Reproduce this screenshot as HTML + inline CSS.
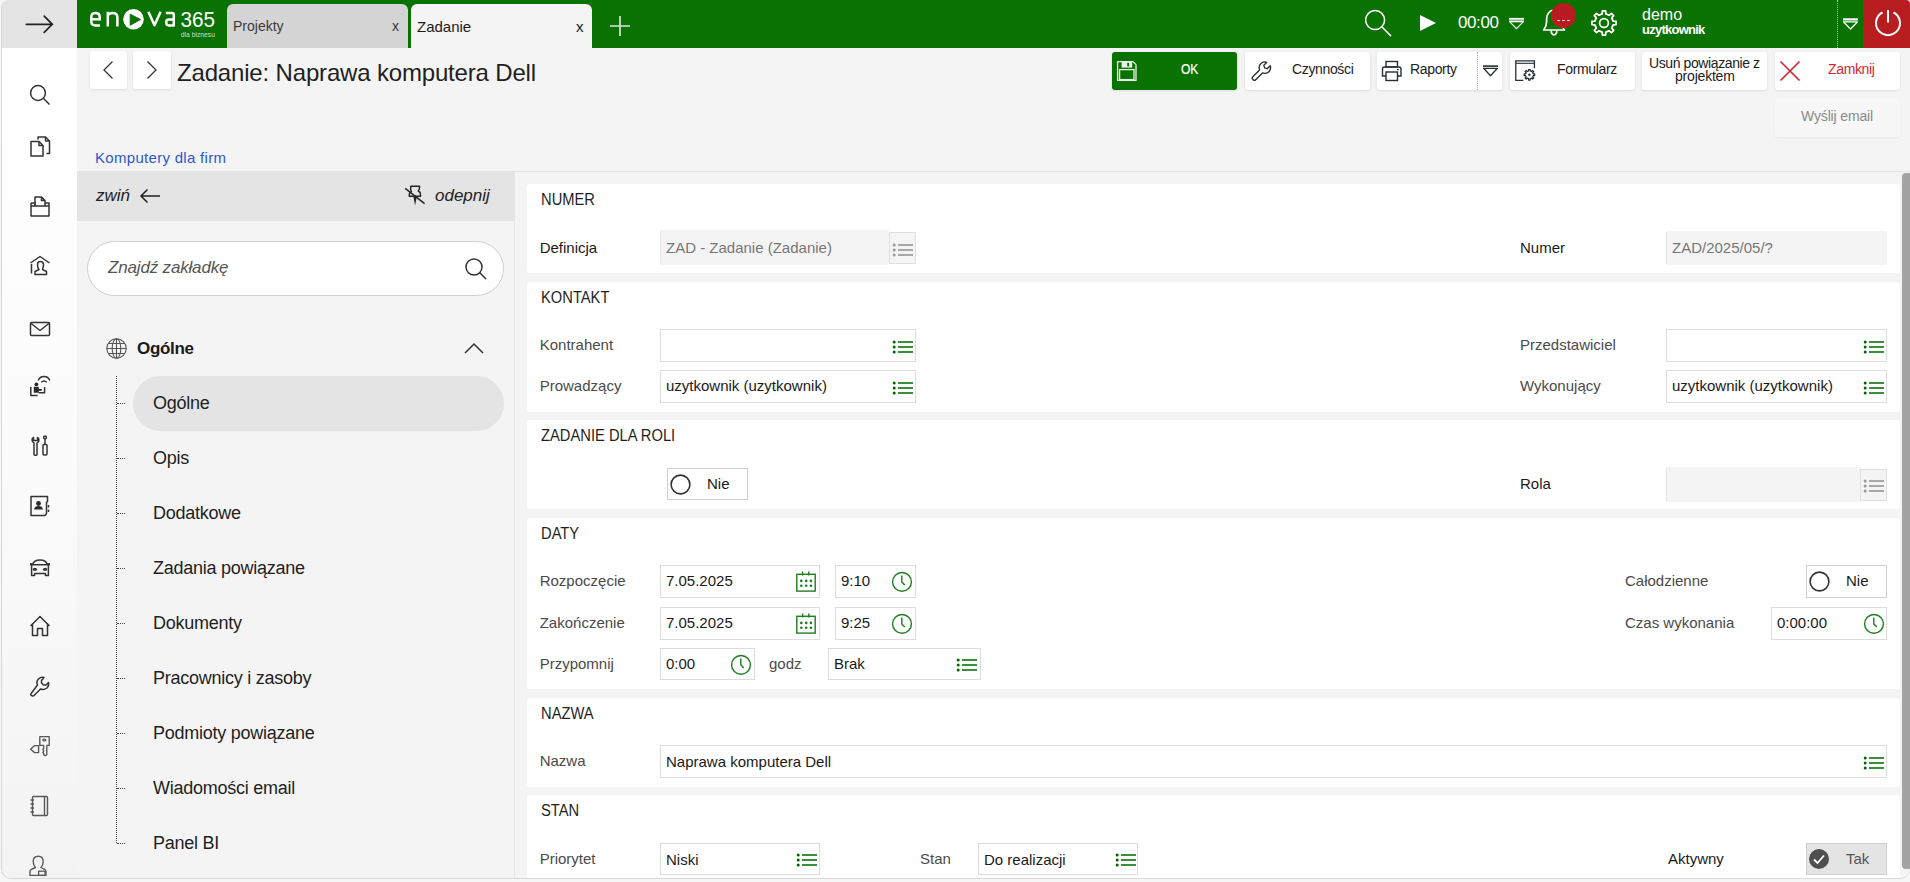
<!DOCTYPE html>
<html><head><meta charset="utf-8"><title>Zadanie</title>
<style>
html,body{margin:0;padding:0;}
body{width:1910px;height:882px;overflow:hidden;background:#f6f6f6;position:relative;
font-family:"Liberation Sans",sans-serif;}
.t{position:absolute;white-space:nowrap;line-height:1;}
.b{position:absolute;box-sizing:border-box;}
.s{position:absolute;overflow:visible;}
</style></head><body>
<div class="b" style="left:1px;top:0;width:1909px;height:879px;border-radius:8px 4px 10px 10px;border-left:1px solid #d8d8d8;border-bottom:1px solid #d8d8d8;overflow:hidden;background:#f4f4f4;"><div class="b" style="left:0;top:48px;width:75px;height:830px;background:linear-gradient(#ffffff 0%,#fbfbfb 50%,#f3f3f3 100%);"></div><div class="b" style="left:0;top:0;width:76px;height:48px;background:#e4e4e4;"></div></div>
<svg class="s" style="left:25px;top:15px;" width="30" height="20" viewBox="0 0 30 20"><path d="M1.3 9.3H27.3M19.2 1.2L27.3 9.3L19.2 17.4" fill="none" stroke="#222" stroke-width="1.7" stroke-linecap="round"/></svg>
<div class="b" style="left:77px;top:0px;width:1786px;height:48px;background:#0a7200;"></div>
<div class="b" style="left:1863px;top:0px;width:47px;height:48px;background:#b81d1f;border-top-right-radius:4px;"></div>
<svg class="s" style="left:77px;top:0px;" width="150" height="48" viewBox="0 0 150 48"><path d="M14.3 19.2H22.7V17C22.7 14.2 21 12.9 18.4 12.9C15.8 12.9 14.3 14.4 14.3 17V21.5C14.3 24.1 15.8 25.4 18.4 25.4H23" fill="none" stroke="#fff" stroke-width="2.5"/><path d="M30.8 11.7V26.6M30.8 15.5C31.8 13.5 33.5 12.9 35.5 12.9C38.8 12.9 40.4 14.5 40.4 17.5V26.6" fill="none" stroke="#fff" stroke-width="2.5"/><circle cx="56.5" cy="19.3" r="10.3" fill="#fff"/><path d="M53.2 14.2L63.5 19.5L53.2 25.2Z" fill="#0a7200" stroke="#0a7200" stroke-width="1" stroke-linejoin="round"/><path d="M71.4 11.8L77.5 25.3L83.6 11.8" fill="none" stroke="#fff" stroke-width="2.5" stroke-linejoin="round"/><path d="M88.8 12.9H95.2C96.3 12.9 96.8 13.5 96.8 14.6V26.6M96.8 19.4H91.7C90 19.4 89.3 20.2 89.3 21.9V23.1C89.3 24.7 90 25.4 91.7 25.4H96.8" fill="none" stroke="#fff" stroke-width="2.5"/><text x="103.6" y="26.6" font-size="21.5" fill="#fff" font-family="Liberation Sans" textLength="34.5" lengthAdjust="spacingAndGlyphs">365</text><text x="103.8" y="36.8" font-size="7.2" fill="#c9dfc6" font-family="Liberation Sans" textLength="34.2" lengthAdjust="spacingAndGlyphs">dla biznesu</text></svg>
<div class="b" style="left:227px;top:4px;width:181px;height:44px;background:#d4d4d4;border-radius:6px 6px 0 0;"></div>
<div class="t" style="left:233px;top:19px;font-size:14px;color:#3a3a3a;font-weight:normal;font-style:normal;">Projekty</div>
<div class="t" style="left:392px;top:19px;font-size:14px;color:#3a3a3a;font-weight:normal;font-style:normal;">x</div>
<div class="b" style="left:411px;top:4px;width:181px;height:44px;background:#f4f4f4;border-radius:6px 6px 0 0;"></div>
<div class="t" style="left:417px;top:19px;font-size:15px;color:#1a1a1a;font-weight:normal;font-style:normal;">Zadanie</div>
<div class="t" style="left:576px;top:19px;font-size:15px;color:#1a1a1a;font-weight:normal;font-style:normal;">x</div>
<svg class="s" style="left:609px;top:15px;" width="22" height="22" viewBox="0 0 22 22"><path d="M11 1V21M1 11H21" stroke="#d5e8d5" stroke-width="1.7"/></svg>
<svg class="s" style="left:1363px;top:8px;" width="30" height="30" viewBox="0 0 30 30"><circle cx="12.1" cy="12.1" r="9.5" fill="none" stroke="#fff" stroke-width="1.5"/><path d="M19 19L27.6 27.6" stroke="#fff" stroke-width="1.5" stroke-linecap="round"/></svg>
<svg class="s" style="left:1418px;top:13px;" width="22" height="20" viewBox="0 0 22 20"><path d="M2 2L18 10L2 18Z" fill="#fff"/></svg>
<div class="t" style="left:1458px;top:14px;font-size:17px;color:#fff;font-weight:normal;font-style:normal;letter-spacing:-0.4px;">00:00</div>
<svg class="s" style="left:1508px;top:16px;" width="18" height="16" viewBox="0 0 18 16"><rect x="1" y="1.9" width="15" height="1.8" fill="#fff"/><rect x="1" y="3.7" width="15" height="1.9" fill="#fff" opacity=".5"/><path d="M1.6 5.6H15.4L8.5 12.6Z" fill="none" stroke="#fff" stroke-width="1.2" stroke-linejoin="round"/></svg>
<svg class="s" style="left:1541px;top:8px;" width="28" height="30" viewBox="0 0 28 30"><path d="M2.6 22C4.6 19.5 5.6 17.5 5.6 14V11C5.6 6 8.6 2.2 13 2.2C17.4 2.2 20.4 6 20.4 11V14C20.4 17.5 21.4 19.5 23.4 22Z" fill="none" stroke="#fff" stroke-width="1.7" stroke-linejoin="round"/><path d="M10.2 22.6C10.2 25.4 11.5 26.8 13 26.8C14.5 26.8 15.8 25.4 15.8 22.6" fill="none" stroke="#fff" stroke-width="1.7"/></svg>
<svg class="s" style="left:1550px;top:2px;" width="28" height="28" viewBox="0 0 28 28"><circle cx="13.5" cy="13.5" r="12.5" fill="#b81c20"/><path d="M7.3 18.5H9.9M12.2 18.5H14.8M17.1 18.5H19.7" stroke="#fff" stroke-width="1.1"/></svg>
<svg class="s" style="left:1591px;top:10px;" width="26" height="26" viewBox="0 0 26 26"><path d="M22.11 11.15L25.10 11.42L25.10 14.58L22.11 14.85L20.75 18.14L22.67 20.44L20.44 22.67L18.14 20.75L14.85 22.11L14.58 25.10L11.42 25.10L11.15 22.11L7.86 20.75L5.56 22.67L3.33 20.44L5.25 18.14L3.89 14.85L0.90 14.58L0.90 11.42L3.89 11.15L5.25 7.86L3.33 5.56L5.56 3.33L7.86 5.25L11.15 3.89L11.42 0.90L14.58 0.90L14.85 3.89L18.14 5.25L20.44 3.33L22.67 5.56L20.75 7.86Z" fill="none" stroke="#fff" stroke-width="1.8" stroke-linejoin="round"/><circle cx="13" cy="13" r="4.4" fill="none" stroke="#fff" stroke-width="1.7"/></svg>
<div class="t" style="left:1642px;top:7px;font-size:16px;color:#fff;font-weight:normal;font-style:normal;">demo</div>
<div class="t" style="left:1642px;top:23px;font-size:13px;color:#fff;font-weight:bold;font-style:normal;letter-spacing:-0.75px;">uzytkownik</div>
<div class="b" style="left:1837px;top:0px;width:1px;height:48px;border-left:1px dotted rgba(255,255,255,.6);"></div>
<svg class="s" style="left:1842px;top:16px;" width="18" height="16" viewBox="0 0 18 16"><rect x="1" y="2.3" width="15" height="1.8" fill="#fff"/><rect x="1" y="4.1" width="15" height="1.9" fill="#fff" opacity=".5"/><path d="M1.6 6H15.4L8.5 13Z" fill="none" stroke="#fff" stroke-width="1.2" stroke-linejoin="round"/></svg>
<svg class="s" style="left:1874px;top:9px;" width="28" height="28" viewBox="0 0 28 28"><path d="M8.5 3.5A12 12 0 1 0 19.5 3.5" fill="none" stroke="#fff" stroke-width="2"/><path d="M14 1V13.5" stroke="#fff" stroke-width="2"/></svg>
<div class="b" style="left:90px;top:51px;width:37px;height:38px;background:#fff;border-radius:3px;box-shadow:0 1px 3px rgba(0,0,0,.10);"></div>
<div class="b" style="left:133px;top:51px;width:38px;height:38px;background:#fff;border-radius:3px;box-shadow:0 1px 3px rgba(0,0,0,.10);"></div>
<svg class="s" style="left:101px;top:60px;" width="14" height="20" viewBox="0 0 14 20"><path d="M11.5 1.5L3 10L11.5 18.5" fill="none" stroke="#333" stroke-width="1.3"/></svg>
<svg class="s" style="left:145px;top:60px;" width="14" height="20" viewBox="0 0 14 20"><path d="M2.5 1.5L11 10L2.5 18.5" fill="none" stroke="#333" stroke-width="1.3"/></svg>
<div class="t" style="left:177px;top:61px;font-size:24px;color:#1f1f1f;font-weight:normal;font-style:normal;letter-spacing:-0.17px;">Zadanie: Naprawa komputera Dell</div>
<div class="b" style="left:1112px;top:52px;width:125px;height:38px;background:#0a7200;border-radius:3px;box-shadow:0 1px 3px rgba(0,0,0,.10);"></div>
<svg class="s" style="left:1116px;top:60px;" width="22" height="22" viewBox="0 0 22 22"><path d="M1.6 1.6H17L20 4.6V20.4H1.6Z" fill="none" stroke="#e8f2e8" stroke-width="1.3" stroke-linejoin="round"/><rect x="5.6" y="1.8" width="10.6" height="5.8" fill="#e8f2e8"/><rect x="11.2" y="2.8" width="1.9" height="3.6" fill="#0b7000"/><rect x="3.6" y="9.6" width="14.4" height="10" fill="none" stroke="#e8f2e8" stroke-width="1.3"/></svg>
<div class="t" style="left:1181px;top:61px;font-size:15px;color:#fff;font-weight:normal;font-style:normal;transform:scaleX(0.8);transform-origin:0 0;-webkit-text-stroke:0.2px #fff;">OK</div>
<div class="b" style="left:1245px;top:52px;width:125px;height:38px;background:#fff;border-radius:3px;box-shadow:0 1px 3px rgba(0,0,0,.10);"></div>
<svg class="s" style="left:1249px;top:59px;" width="24" height="24" viewBox="0 0 24 24"><g transform="translate(1.2 1.2) scale(0.85)"><path d="M3 22.5C2 21.5 2 20.5 3 19.5L11 11.5C10 8.5 10.5 5.5 13 3.5C15 2 17.5 1.5 19.5 2.5L16 6L17 9L20 10L23.5 6.5C24.3 8.5 24 11 22.5 13C20.5 15.5 17.5 16 14.5 15L6.5 23C5.5 24 4.5 24 3.5 23Z" fill="none" stroke="#263036" stroke-width="1.6" stroke-linejoin="round"/></g></svg>
<div class="t" style="left:1292px;top:62px;font-size:14px;color:#222;font-weight:normal;font-style:normal;letter-spacing:-0.35px;">Czynności</div>
<div class="b" style="left:1377px;top:52px;width:125px;height:38px;background:#fff;border-radius:3px;box-shadow:0 1px 3px rgba(0,0,0,.10);"></div>
<div class="b" style="left:1477px;top:52px;width:1px;height:38px;border-left:1px dotted #aaa;"></div>
<svg class="s" style="left:1381px;top:60px;" width="24" height="24" viewBox="0 0 24 24"><g fill="none" stroke="#263036" stroke-width="1.4"><rect x="5" y="1.5" width="11.5" height="5.5"/><path d="M5 16H1.5V9C1.5 8 2 7 3.5 7H18C19.5 7 20 8 20 9V16H16.5"/><rect x="5" y="12" width="11.5" height="8.5"/></g><circle cx="16.8" cy="9.6" r=".9" fill="#263036"/></svg>
<div class="t" style="left:1410px;top:62px;font-size:14px;color:#222;font-weight:normal;font-style:normal;letter-spacing:-0.35px;">Raporty</div>
<svg class="s" style="left:1482px;top:62px;" width="18" height="16" viewBox="0 0 18 16"><rect x="1" y="3.3" width="15" height="1.6" fill="#263036"/><path d="M1.6 6.3H15.4L8.5 13.8Z" fill="none" stroke="#263036" stroke-width="1.3" stroke-linejoin="round"/></svg>
<div class="b" style="left:1510px;top:52px;width:125px;height:38px;background:#fff;border-radius:3px;box-shadow:0 1px 3px rgba(0,0,0,.10);"></div>
<svg class="s" style="left:1515px;top:60px;" width="22" height="22" viewBox="0 0 22 22"><g fill="none" stroke="#263036" stroke-width="1.3"><path d="M8.4 20.3H0.8V0.8H19.4V8.3"/><path d="M0.8 3.3H19.4" stroke-width="1.1"/><path d="M18.21 13.95L19.64 14.01L19.64 15.59L18.21 15.65L17.69 16.89L18.67 17.95L17.55 19.07L16.49 18.09L15.25 18.61L15.19 20.04L13.61 20.04L13.55 18.61L12.31 18.09L11.25 19.07L10.13 17.95L11.11 16.89L10.59 15.65L9.16 15.59L9.16 14.01L10.59 13.95L11.11 12.71L10.13 11.65L11.25 10.53L12.31 11.51L13.55 10.99L13.61 9.56L15.19 9.56L15.25 10.99L16.49 11.51L17.55 10.53L18.67 11.65L17.69 12.71Z" stroke-linejoin="round"/></g><circle cx="14.4" cy="14.8" r="1.2" fill="#263036"/></svg>
<div class="t" style="left:1557px;top:62px;font-size:14px;color:#222;font-weight:normal;font-style:normal;letter-spacing:-0.35px;">Formularz</div>
<div class="b" style="left:1642px;top:52px;width:125px;height:38px;background:#fff;border-radius:3px;box-shadow:0 1px 3px rgba(0,0,0,.10);"></div>
<div class="t" style="left:1649px;top:56px;font-size:14px;color:#222;font-weight:normal;font-style:normal;letter-spacing:-0.4px;">Usuń powiązanie z</div>
<div class="t" style="left:1675px;top:69px;font-size:14px;color:#222;font-weight:normal;font-style:normal;letter-spacing:-0.2px;">projektem</div>
<div class="b" style="left:1775px;top:52px;width:125px;height:38px;background:#fff;border-radius:3px;box-shadow:0 1px 3px rgba(0,0,0,.10);"></div>
<svg class="s" style="left:1778px;top:59px;" width="24" height="24" viewBox="0 0 24 24"><path d="M2.5 2.5L21.5 21.5M21.5 2.5L2.5 21.5" stroke="#d32630" stroke-width="1.7"/></svg>
<div class="t" style="left:1828px;top:62px;font-size:14px;color:#d32630;font-weight:normal;font-style:normal;letter-spacing:-0.35px;">Zamknij</div>
<div class="b" style="left:1775px;top:99px;width:125px;height:38px;background:#f7f7f7;border-radius:3px;box-shadow:0 1px 2px rgba(0,0,0,.05);"></div>
<div class="t" style="left:1801px;top:109px;font-size:14px;color:#8a8a8a;font-weight:normal;font-style:normal;letter-spacing:-0.15px;">Wyślij email</div>
<div class="t" style="left:95px;top:150px;font-size:15px;color:#2f56d4;font-weight:normal;font-style:normal;letter-spacing:0.3px;">Komputery dla firm</div>
<div class="b" style="left:77px;top:171px;width:437px;height:50px;background:#e4e4e4;"></div>
<div class="b" style="left:514px;top:171px;width:1px;height:707px;background:#e6e6e6;"></div>
<div class="t" style="left:96px;top:187px;font-size:17px;color:#222;font-weight:normal;font-style:italic;">zwiń</div>
<svg class="s" style="left:139px;top:188px;" width="22" height="16" viewBox="0 0 22 16"><path d="M21 8H2M8.5 1.5L2 8L8.5 14.5" fill="none" stroke="#222" stroke-width="1.5"/></svg>
<svg class="s" style="left:404px;top:185px;" width="22" height="22" viewBox="0 0 22 22"><path d="M6.8 1.3H15.6L15.2 4.6L14.2 5.9L16.2 7.6L16.6 11.2H5.2L5.4 8.6L7.4 6.6L6.6 4.4Z" fill="none" stroke="#222" stroke-width="1.4" stroke-linejoin="round"/><path d="M9.4 11.2H12.8L11.1 20.6Z" fill="#222"/><path d="M1.2 3.4L20.6 18.6" stroke="#222" stroke-width="1.4"/></svg>
<div class="t" style="left:435px;top:187px;font-size:17px;color:#222;font-weight:normal;font-style:italic;">odepnij</div>
<div class="b" style="left:87px;top:241px;width:417px;height:55px;background:#fff;border:1px solid #cfcfcf;border-radius:28px;"></div>
<div class="t" style="left:108px;top:259px;font-size:17px;color:#555;font-weight:normal;font-style:italic;letter-spacing:-0.17px;">Znajdź zakładkę</div>
<svg class="s" style="left:463px;top:256px;" width="26" height="26" viewBox="0 0 26 26"><circle cx="11" cy="11" r="8" fill="none" stroke="#333" stroke-width="1.5"/><path d="M16.8 16.8L23 23" stroke="#333" stroke-width="1.5"/></svg>
<svg class="s" style="left:105px;top:337px;" width="23" height="23" viewBox="0 0 23 23"><g fill="none" stroke="#555" stroke-width="1.1"><circle cx="11.5" cy="11.5" r="9.7"/><ellipse cx="11.5" cy="11.5" rx="4.3" ry="9.7"/><path d="M11.5 1.8V21.2M1.8 11.5H21.2M3.2 6.5H19.8M3.2 16.5H19.8"/></g></svg>
<div class="t" style="left:137px;top:340px;font-size:17px;color:#1a1a1a;font-weight:bold;font-style:normal;letter-spacing:-0.3px;">Ogólne</div>
<svg class="s" style="left:463px;top:341px;" width="22" height="14" viewBox="0 0 22 14"><path d="M2 12L11 3L20 12" fill="none" stroke="#333" stroke-width="1.5"/></svg>
<div class="b" style="left:116px;top:376px;width:1px;height:467px;border-left:1px dotted #444;"></div>
<div class="b" style="left:133px;top:376px;width:371px;height:55px;background:#e4e4e4;border-radius:28px;"></div>
<div class="b" style="left:117px;top:403px;width:8px;height:1px;border-top:1px dotted #444;"></div>
<div class="t" style="left:153px;top:394px;font-size:18px;color:#1f1f1f;font-weight:normal;font-style:normal;letter-spacing:-0.25px;">Ogólne</div>
<div class="b" style="left:117px;top:458px;width:8px;height:1px;border-top:1px dotted #444;"></div>
<div class="t" style="left:153px;top:449px;font-size:18px;color:#1f1f1f;font-weight:normal;font-style:normal;letter-spacing:-0.25px;">Opis</div>
<div class="b" style="left:117px;top:513px;width:8px;height:1px;border-top:1px dotted #444;"></div>
<div class="t" style="left:153px;top:504px;font-size:18px;color:#1f1f1f;font-weight:normal;font-style:normal;letter-spacing:-0.25px;">Dodatkowe</div>
<div class="b" style="left:117px;top:568px;width:8px;height:1px;border-top:1px dotted #444;"></div>
<div class="t" style="left:153px;top:559px;font-size:18px;color:#1f1f1f;font-weight:normal;font-style:normal;letter-spacing:-0.25px;">Zadania powiązane</div>
<div class="b" style="left:117px;top:623px;width:8px;height:1px;border-top:1px dotted #444;"></div>
<div class="t" style="left:153px;top:614px;font-size:18px;color:#1f1f1f;font-weight:normal;font-style:normal;letter-spacing:-0.25px;">Dokumenty</div>
<div class="b" style="left:117px;top:678px;width:8px;height:1px;border-top:1px dotted #444;"></div>
<div class="t" style="left:153px;top:669px;font-size:18px;color:#1f1f1f;font-weight:normal;font-style:normal;letter-spacing:-0.25px;">Pracownicy i zasoby</div>
<div class="b" style="left:117px;top:733px;width:8px;height:1px;border-top:1px dotted #444;"></div>
<div class="t" style="left:153px;top:724px;font-size:18px;color:#1f1f1f;font-weight:normal;font-style:normal;letter-spacing:-0.25px;">Podmioty powiązane</div>
<div class="b" style="left:117px;top:788px;width:8px;height:1px;border-top:1px dotted #444;"></div>
<div class="t" style="left:153px;top:779px;font-size:18px;color:#1f1f1f;font-weight:normal;font-style:normal;letter-spacing:-0.25px;">Wiadomości email</div>
<div class="b" style="left:117px;top:843px;width:8px;height:1px;border-top:1px dotted #444;"></div>
<div class="t" style="left:153px;top:834px;font-size:18px;color:#1f1f1f;font-weight:normal;font-style:normal;letter-spacing:-0.25px;">Panel BI</div>
<div class="b" style="left:515px;top:171px;width:1395px;height:1px;background:#e2e2e2;"></div>
<div class="b" style="left:527px;top:184px;width:1373px;height:89px;background:#fff;border-radius:3px;"></div>
<div class="b" style="left:527px;top:282px;width:1373px;height:130px;background:#fff;border-radius:3px;"></div>
<div class="b" style="left:527px;top:420px;width:1373px;height:89px;background:#fff;border-radius:3px;"></div>
<div class="b" style="left:527px;top:518px;width:1373px;height:171px;background:#fff;border-radius:3px;"></div>
<div class="b" style="left:527px;top:698px;width:1373px;height:89px;background:#fff;border-radius:3px;"></div>
<div class="b" style="left:527px;top:795px;width:1373px;height:83px;background:#fff;border-radius:3px 3px 0 0;"></div>
<div class="t" style="left:541px;top:192px;font-size:16px;color:#1f1f1f;font-weight:normal;font-style:normal;transform:scaleX(0.92);transform-origin:0 0;">NUMER</div>
<div class="t" style="left:539.7px;top:240px;font-size:15px;color:#1a1a1a;font-weight:normal;font-style:normal;">Definicja</div>
<div class="b" style="left:660px;top:230px;width:230px;height:35px;background:#f4f4f4;border-left:1px solid #e6e6e6;border-radius:2px;"></div>
<div class="b" style="left:889px;top:232px;width:27px;height:32px;background:#f4f4f4;border:1px solid #e0e0e0;"></div>
<svg class="s" style="left:892px;top:243px;" width="20" height="14" viewBox="0 0 20 14"><circle cx="2.2" cy="2" r="1.5" fill="#9a9a9a"/><circle cx="2.2" cy="7" r="1.5" fill="#9a9a9a"/><circle cx="2.2" cy="12" r="1.5" fill="#9a9a9a"/><path d="M6 2H21M6 7H21M6 12H21" stroke="#a8a8a8" stroke-width="1.9"/></svg>
<div class="t" style="left:666px;top:240px;font-size:15px;color:#777;font-weight:normal;font-style:normal;">ZAD - Zadanie (Zadanie)</div>
<div class="t" style="left:1520px;top:240px;font-size:15px;color:#1a1a1a;font-weight:normal;font-style:normal;">Numer</div>
<div class="b" style="left:1666px;top:231px;width:221px;height:34px;background:#f4f4f4;border-left:1px solid #e6e6e6;border-radius:2px;"></div>
<div class="t" style="left:1672px;top:240px;font-size:15px;color:#777;font-weight:normal;font-style:normal;">ZAD/2025/05/?</div>
<div class="t" style="left:541px;top:290px;font-size:16px;color:#1f1f1f;font-weight:normal;font-style:normal;transform:scaleX(0.92);transform-origin:0 0;">KONTAKT</div>
<div class="t" style="left:539.7px;top:337px;font-size:15px;color:#4a4a4a;font-weight:normal;font-style:normal;">Kontrahent</div>
<div class="b" style="left:660px;top:329px;width:256px;height:33px;background:#fff;border:1px solid #dcdcdc;"></div>
<svg class="s" style="left:892px;top:340px;" width="20" height="14" viewBox="0 0 20 14"><circle cx="2.2" cy="2" r="1.5" fill="#006400"/><circle cx="2.2" cy="7" r="1.5" fill="#006400"/><circle cx="2.2" cy="12" r="1.5" fill="#006400"/><path d="M6 2H21M6 7H21M6 12H21" stroke="#3b8f3b" stroke-width="1.9"/></svg>
<div class="t" style="left:539.7px;top:378px;font-size:15px;color:#4a4a4a;font-weight:normal;font-style:normal;">Prowadzący</div>
<div class="b" style="left:660px;top:370px;width:256px;height:33px;background:#fff;border:1px solid #dcdcdc;"></div>
<svg class="s" style="left:892px;top:381px;" width="20" height="14" viewBox="0 0 20 14"><circle cx="2.2" cy="2" r="1.5" fill="#006400"/><circle cx="2.2" cy="7" r="1.5" fill="#006400"/><circle cx="2.2" cy="12" r="1.5" fill="#006400"/><path d="M6 2H21M6 7H21M6 12H21" stroke="#3b8f3b" stroke-width="1.9"/></svg>
<div class="t" style="left:666px;top:378px;font-size:15px;color:#1a1a1a;font-weight:normal;font-style:normal;">uzytkownik (uzytkownik)</div>
<div class="t" style="left:1520px;top:337px;font-size:15px;color:#4a4a4a;font-weight:normal;font-style:normal;">Przedstawiciel</div>
<div class="b" style="left:1666px;top:329px;width:221px;height:33px;background:#fff;border:1px solid #dcdcdc;"></div>
<svg class="s" style="left:1863px;top:340px;" width="20" height="14" viewBox="0 0 20 14"><circle cx="2.2" cy="2" r="1.5" fill="#006400"/><circle cx="2.2" cy="7" r="1.5" fill="#006400"/><circle cx="2.2" cy="12" r="1.5" fill="#006400"/><path d="M6 2H21M6 7H21M6 12H21" stroke="#3b8f3b" stroke-width="1.9"/></svg>
<div class="t" style="left:1520px;top:378px;font-size:15px;color:#4a4a4a;font-weight:normal;font-style:normal;">Wykonujący</div>
<div class="b" style="left:1666px;top:370px;width:221px;height:33px;background:#fff;border:1px solid #dcdcdc;"></div>
<svg class="s" style="left:1863px;top:381px;" width="20" height="14" viewBox="0 0 20 14"><circle cx="2.2" cy="2" r="1.5" fill="#006400"/><circle cx="2.2" cy="7" r="1.5" fill="#006400"/><circle cx="2.2" cy="12" r="1.5" fill="#006400"/><path d="M6 2H21M6 7H21M6 12H21" stroke="#3b8f3b" stroke-width="1.9"/></svg>
<div class="t" style="left:1672px;top:378px;font-size:15px;color:#1a1a1a;font-weight:normal;font-style:normal;">uzytkownik (uzytkownik)</div>
<div class="t" style="left:541px;top:428px;font-size:16px;color:#1f1f1f;font-weight:normal;font-style:normal;transform:scaleX(0.92);transform-origin:0 0;">ZADANIE DLA ROLI</div>
<div class="b" style="left:667px;top:468px;width:81px;height:32px;background:#fff;border:1px solid #cfcfcf;"></div>
<svg class="s" style="left:670px;top:474px;" width="21" height="21" viewBox="0 0 21 21"><circle cx="10.5" cy="10.5" r="9.4" fill="none" stroke="#333" stroke-width="1.6"/></svg>
<div class="t" style="left:707px;top:476px;font-size:15px;color:#1a1a1a;font-weight:normal;font-style:normal;">Nie</div>
<div class="t" style="left:1520px;top:476px;font-size:15px;color:#1a1a1a;font-weight:normal;font-style:normal;">Rola</div>
<div class="b" style="left:1666px;top:467px;width:195px;height:35px;background:#f4f4f4;border-left:1px solid #e6e6e6;border-radius:2px;"></div>
<div class="b" style="left:1860px;top:469px;width:27px;height:32px;background:#f4f4f4;border:1px solid #e0e0e0;"></div>
<svg class="s" style="left:1863px;top:479px;" width="20" height="14" viewBox="0 0 20 14"><circle cx="2.2" cy="2" r="1.5" fill="#9a9a9a"/><circle cx="2.2" cy="7" r="1.5" fill="#9a9a9a"/><circle cx="2.2" cy="12" r="1.5" fill="#9a9a9a"/><path d="M6 2H21M6 7H21M6 12H21" stroke="#a8a8a8" stroke-width="1.9"/></svg>
<div class="t" style="left:541px;top:526px;font-size:16px;color:#1f1f1f;font-weight:normal;font-style:normal;transform:scaleX(0.92);transform-origin:0 0;">DATY</div>
<div class="t" style="left:539.7px;top:573px;font-size:15px;color:#4a4a4a;font-weight:normal;font-style:normal;">Rozpoczęcie</div>
<div class="b" style="left:660px;top:565px;width:160px;height:33px;background:#fff;border:1px solid #dcdcdc;"></div>
<div class="t" style="left:666px;top:573px;font-size:15px;color:#1a1a1a;font-weight:normal;font-style:normal;">7.05.2025</div>
<svg class="s" style="left:795px;top:571px;" width="22" height="22" viewBox="0 0 22 22"><rect x="1.8" y="3.3" width="18.4" height="16.8" fill="none" stroke="#1e7d1e" stroke-width="1.4"/><path d="M7.6 0.6V4.4M13.8 0.6V4.4" stroke="#1e7d1e" stroke-width="1.4"/><circle cx="6.3" cy="9.9" r="1.3" fill="#1e7d1e"/><circle cx="6.3" cy="14.7" r="1.3" fill="#1e7d1e"/><circle cx="11.2" cy="9.9" r="1.3" fill="#1e7d1e"/><circle cx="11.2" cy="14.7" r="1.3" fill="#1e7d1e"/><circle cx="15.9" cy="9.9" r="1.3" fill="#1e7d1e"/><circle cx="15.9" cy="14.7" r="1.3" fill="#1e7d1e"/></svg>
<div class="b" style="left:835px;top:565px;width:81px;height:33px;background:#fff;border:1px solid #dcdcdc;"></div>
<div class="t" style="left:841px;top:573px;font-size:15px;color:#1a1a1a;font-weight:normal;font-style:normal;">9:10</div>
<svg class="s" style="left:891px;top:571px;" width="22" height="22" viewBox="0 0 22 22"><circle cx="11" cy="10.9" r="9.4" fill="none" stroke="#1e7d1e" stroke-width="1.4"/><path d="M10.8 4.4V10.9L13.8 14" fill="none" stroke="#1e7d1e" stroke-width="1.4"/></svg>
<div class="t" style="left:539.7px;top:615px;font-size:15px;color:#4a4a4a;font-weight:normal;font-style:normal;">Zakończenie</div>
<div class="b" style="left:660px;top:607px;width:160px;height:33px;background:#fff;border:1px solid #dcdcdc;"></div>
<div class="t" style="left:666px;top:615px;font-size:15px;color:#1a1a1a;font-weight:normal;font-style:normal;">7.05.2025</div>
<svg class="s" style="left:795px;top:613px;" width="22" height="22" viewBox="0 0 22 22"><rect x="1.8" y="3.3" width="18.4" height="16.8" fill="none" stroke="#1e7d1e" stroke-width="1.4"/><path d="M7.6 0.6V4.4M13.8 0.6V4.4" stroke="#1e7d1e" stroke-width="1.4"/><circle cx="6.3" cy="9.9" r="1.3" fill="#1e7d1e"/><circle cx="6.3" cy="14.7" r="1.3" fill="#1e7d1e"/><circle cx="11.2" cy="9.9" r="1.3" fill="#1e7d1e"/><circle cx="11.2" cy="14.7" r="1.3" fill="#1e7d1e"/><circle cx="15.9" cy="9.9" r="1.3" fill="#1e7d1e"/><circle cx="15.9" cy="14.7" r="1.3" fill="#1e7d1e"/></svg>
<div class="b" style="left:835px;top:607px;width:81px;height:33px;background:#fff;border:1px solid #dcdcdc;"></div>
<div class="t" style="left:841px;top:615px;font-size:15px;color:#1a1a1a;font-weight:normal;font-style:normal;">9:25</div>
<svg class="s" style="left:891px;top:613px;" width="22" height="22" viewBox="0 0 22 22"><circle cx="11" cy="10.9" r="9.4" fill="none" stroke="#1e7d1e" stroke-width="1.4"/><path d="M10.8 4.4V10.9L13.8 14" fill="none" stroke="#1e7d1e" stroke-width="1.4"/></svg>
<div class="t" style="left:539.7px;top:656px;font-size:15px;color:#4a4a4a;font-weight:normal;font-style:normal;">Przypomnij</div>
<div class="b" style="left:660px;top:648px;width:95px;height:32px;background:#fff;border:1px solid #dcdcdc;"></div>
<div class="t" style="left:666px;top:656px;font-size:15px;color:#1a1a1a;font-weight:normal;font-style:normal;">0:00</div>
<svg class="s" style="left:730px;top:654px;" width="22" height="22" viewBox="0 0 22 22"><circle cx="11" cy="10.9" r="9.4" fill="none" stroke="#1e7d1e" stroke-width="1.4"/><path d="M10.8 4.4V10.9L13.8 14" fill="none" stroke="#1e7d1e" stroke-width="1.4"/></svg>
<div class="t" style="left:769px;top:656px;font-size:15px;color:#4a4a4a;font-weight:normal;font-style:normal;">godz</div>
<div class="b" style="left:828px;top:648px;width:153px;height:32px;background:#fff;border:1px solid #dcdcdc;"></div>
<div class="t" style="left:834px;top:656px;font-size:15px;color:#1a1a1a;font-weight:normal;font-style:normal;">Brak</div>
<svg class="s" style="left:956px;top:658px;" width="20" height="14" viewBox="0 0 20 14"><circle cx="2.2" cy="2" r="1.5" fill="#006400"/><circle cx="2.2" cy="7" r="1.5" fill="#006400"/><circle cx="2.2" cy="12" r="1.5" fill="#006400"/><path d="M6 2H21M6 7H21M6 12H21" stroke="#3b8f3b" stroke-width="1.9"/></svg>
<div class="t" style="left:1625px;top:573px;font-size:15px;color:#4a4a4a;font-weight:normal;font-style:normal;">Całodzienne</div>
<div class="b" style="left:1806px;top:565px;width:81px;height:33px;background:#fff;border:1px solid #cfcfcf;"></div>
<svg class="s" style="left:1809px;top:571px;" width="21" height="21" viewBox="0 0 21 21"><circle cx="10.5" cy="10.5" r="9.4" fill="none" stroke="#333" stroke-width="1.6"/></svg>
<div class="t" style="left:1846px;top:573px;font-size:15px;color:#1a1a1a;font-weight:normal;font-style:normal;">Nie</div>
<div class="t" style="left:1625px;top:615px;font-size:15px;color:#4a4a4a;font-weight:normal;font-style:normal;">Czas wykonania</div>
<div class="b" style="left:1771px;top:607px;width:116px;height:33px;background:#fff;border:1px solid #dcdcdc;"></div>
<div class="t" style="left:1777px;top:615px;font-size:15px;color:#1a1a1a;font-weight:normal;font-style:normal;">0:00:00</div>
<svg class="s" style="left:1863px;top:613px;" width="22" height="22" viewBox="0 0 22 22"><circle cx="11" cy="10.9" r="9.4" fill="none" stroke="#1e7d1e" stroke-width="1.4"/><path d="M10.8 4.4V10.9L13.8 14" fill="none" stroke="#1e7d1e" stroke-width="1.4"/></svg>
<div class="t" style="left:541px;top:706px;font-size:16px;color:#1f1f1f;font-weight:normal;font-style:normal;transform:scaleX(0.92);transform-origin:0 0;">NAZWA</div>
<div class="t" style="left:539.7px;top:753px;font-size:15px;color:#4a4a4a;font-weight:normal;font-style:normal;">Nazwa</div>
<div class="b" style="left:660px;top:745px;width:1227px;height:33px;background:#fff;border:1px solid #dcdcdc;"></div>
<div class="t" style="left:666px;top:754px;font-size:15px;color:#1a1a1a;font-weight:normal;font-style:normal;">Naprawa komputera Dell</div>
<svg class="s" style="left:1863px;top:756px;" width="20" height="14" viewBox="0 0 20 14"><circle cx="2.2" cy="2" r="1.5" fill="#006400"/><circle cx="2.2" cy="7" r="1.5" fill="#006400"/><circle cx="2.2" cy="12" r="1.5" fill="#006400"/><path d="M6 2H21M6 7H21M6 12H21" stroke="#3b8f3b" stroke-width="1.9"/></svg>
<div class="t" style="left:541px;top:803px;font-size:16px;color:#1f1f1f;font-weight:normal;font-style:normal;transform:scaleX(0.92);transform-origin:0 0;">STAN</div>
<div class="t" style="left:539.7px;top:851px;font-size:15px;color:#4a4a4a;font-weight:normal;font-style:normal;">Priorytet</div>
<div class="b" style="left:660px;top:843px;width:160px;height:32px;background:#fff;border:1px solid #dcdcdc;"></div>
<div class="t" style="left:666px;top:852px;font-size:15px;color:#1a1a1a;font-weight:normal;font-style:normal;">Niski</div>
<svg class="s" style="left:796px;top:853px;" width="20" height="14" viewBox="0 0 20 14"><circle cx="2.2" cy="2" r="1.5" fill="#006400"/><circle cx="2.2" cy="7" r="1.5" fill="#006400"/><circle cx="2.2" cy="12" r="1.5" fill="#006400"/><path d="M6 2H21M6 7H21M6 12H21" stroke="#3b8f3b" stroke-width="1.9"/></svg>
<div class="t" style="left:920px;top:851px;font-size:15px;color:#4a4a4a;font-weight:normal;font-style:normal;">Stan</div>
<div class="b" style="left:978px;top:843px;width:160px;height:32px;background:#fff;border:1px solid #dcdcdc;"></div>
<div class="t" style="left:984px;top:852px;font-size:15px;color:#1a1a1a;font-weight:normal;font-style:normal;">Do realizacji</div>
<svg class="s" style="left:1115px;top:853px;" width="20" height="14" viewBox="0 0 20 14"><circle cx="2.2" cy="2" r="1.5" fill="#006400"/><circle cx="2.2" cy="7" r="1.5" fill="#006400"/><circle cx="2.2" cy="12" r="1.5" fill="#006400"/><path d="M6 2H21M6 7H21M6 12H21" stroke="#3b8f3b" stroke-width="1.9"/></svg>
<div class="t" style="left:1668px;top:851px;font-size:15px;color:#1a1a1a;font-weight:normal;font-style:normal;">Aktywny</div>
<div class="b" style="left:1806px;top:843px;width:81px;height:32px;background:#e4e4e4;border:1px solid #cfcfcf;"></div>
<svg class="s" style="left:1809px;top:849px;" width="20" height="20" viewBox="0 0 20 20"><circle cx="10" cy="10" r="10" fill="#4f4f4f"/><path d="M5 10.5L8.5 14L15 6.5" fill="none" stroke="#fff" stroke-width="1.8"/></svg>
<div class="t" style="left:1846px;top:851px;font-size:15px;color:#555;font-weight:normal;font-style:normal;">Tak</div>
<div class="b" style="left:1902px;top:173px;width:10px;height:696px;background:#a3a3a3;border-radius:4px;"></div>
<svg class="s" style="left:29px;top:84px;" width="22" height="22" viewBox="0 0 22 22"><circle cx="9" cy="9" r="7.4" fill="none" stroke="#333" stroke-width="1.5" stroke-linejoin="round"/><path d="M14.3 14.3L20.5 20.5" fill="none" stroke="#333" stroke-width="1.5" stroke-linejoin="round"/></svg>
<svg class="s" style="left:29px;top:135px;" width="22" height="22" viewBox="0 0 22 22"><path d="M9 4.5V2H16.5L20.5 6V18.5H17.5" fill="none" stroke="#333" stroke-width="1.5" stroke-linejoin="round"/><path d="M16.5 2V6H20.5" fill="none" stroke="#333" stroke-width="1.5" stroke-linejoin="round"/><path d="M2 6.5H10L14 10.5V21H2Z" fill="none" stroke="#333" stroke-width="1.5" stroke-linejoin="round"/><path d="M10 6.5V10.5H14" fill="none" stroke="#333" stroke-width="1.5" stroke-linejoin="round"/></svg>
<svg class="s" style="left:29px;top:195px;" width="22" height="22" viewBox="0 0 22 22"><path d="M2 8H6V11M16 8H20V21H2V8M2 11H20" fill="none" stroke="#333" stroke-width="1.5" stroke-linejoin="round"/><path d="M6 11V2H12.5L16 5.5V11M12.5 2V5.5H16" fill="none" stroke="#333" stroke-width="1.5" stroke-linejoin="round"/></svg>
<svg class="s" style="left:29px;top:255px;" width="22" height="22" viewBox="0 0 22 22"><path d="M1.5 8L11 1.5L20.5 8M2.5 9V18.5" fill="none" stroke="#333" stroke-width="1.5" stroke-linejoin="round"/><path d="M8.5 9.5C8.5 7.5 9.5 6.5 11.5 6.5C13.5 6.5 14.5 7.5 14.5 9.5C14.5 12 13.5 14 13.5 14.5L17.5 16.5V19.5H6V16.5L10 14.5C9.5 14 8.5 12 8.5 9.5Z" fill="none" stroke="#333" stroke-width="1.5" stroke-linejoin="round"/></svg>
<svg class="s" style="left:29px;top:321px;" width="22" height="16" viewBox="0 0 22 16"><rect x="1.5" y="1.5" width="19" height="13" rx="1" fill="none" stroke="#333" stroke-width="1.5" stroke-linejoin="round"/><path d="M1.5 2L11 9.5L20.5 2" fill="none" stroke="#333" stroke-width="1.5" stroke-linejoin="round"/></svg>
<svg class="s" style="left:29px;top:375px;" width="22" height="22" viewBox="0 0 22 22"><path d="M9.2 5.4A6.2 6.2 0 0 1 20.8 5.4M12.3 7.4A3.4 3.4 0 0 1 17.7 7.4" fill="none" stroke="#333" stroke-width="1.5" stroke-linejoin="round"/><circle cx="7.4" cy="9.3" r="1.9" fill="#2a2a2a"/><path d="M4.8 11.8H9.4L10.2 14H12.8V15.8H9.9L9.8 17.8H4.8Z" fill="#2a2a2a"/><path d="M1.8 12V20.6H8.6M9.6 17.8H15.6V12" fill="none" stroke="#333" stroke-width="1.5" stroke-linejoin="round"/></svg>
<svg class="s" style="left:29px;top:435px;" width="22" height="22" viewBox="0 0 22 22"><path d="M4.5 2.5C2.5 3.5 2.5 7 5 8V19.5C5 20.5 8 20.5 8 19.5V8C10.5 7 10.5 3.5 8.5 2.5V5.5H4.5Z" fill="none" stroke="#333" stroke-width="1.5" stroke-linejoin="round"/><circle cx="16" cy="2.5" r="1.4" fill="none" stroke="#333" stroke-width="1.5" stroke-linejoin="round"/><path d="M16 4V9" fill="none" stroke="#333" stroke-width="1.5" stroke-linejoin="round"/><rect x="14" y="9.5" width="4" height="10.5" rx="1" fill="none" stroke="#333" stroke-width="1.5" stroke-linejoin="round"/></svg>
<svg class="s" style="left:29px;top:495px;" width="22" height="22" viewBox="0 0 22 22"><path d="M2 1.5H18.5V6.5L17.5 7.5V18.5L16 20.5H2Z" fill="none" stroke="#333" stroke-width="1.5" stroke-linejoin="round"/><circle cx="9.5" cy="8.5" r="2.4" fill="#2a2a2a"/><path d="M5 14.5C5.5 12 7 11 9.5 11C12 11 13.5 12 14 14.5Z" fill="#2a2a2a"/><path d="M19.5 10V12.5M19.5 14.5V17" fill="none" stroke="#333" stroke-width="1.5" stroke-linejoin="round"/></svg>
<svg class="s" style="left:29px;top:558px;" width="22" height="20" viewBox="0 0 22 20"><path d="M3.5 6.8C4.5 3 7 1.9 11 1.9C15 1.9 17.5 3 18.5 6.8" fill="none" stroke="#333" stroke-width="1.5" stroke-linejoin="round"/><rect x="1" y="5.2" width="2.6" height="2.2" fill="#2a2a2a"/><rect x="18.4" y="5.2" width="2.6" height="2.2" fill="#2a2a2a"/><path d="M2.6 6.8H19.4V17.4H16.4V15.6H5.6V17.4H2.6Z" fill="none" stroke="#333" stroke-width="1.5" stroke-linejoin="round"/><ellipse cx="5.9" cy="11.3" rx="1.5" ry="0.9" fill="none" stroke="#333" stroke-width="1.5" stroke-linejoin="round" stroke-width="1.2"/><ellipse cx="16.1" cy="11.3" rx="1.5" ry="0.9" fill="none" stroke="#333" stroke-width="1.5" stroke-linejoin="round" stroke-width="1.2"/></svg>
<svg class="s" style="left:29px;top:615px;" width="22" height="22" viewBox="0 0 22 22"><path d="M1.5 11L11 1.5L20.5 11M3.5 9V20.5H8.5V13.5H13.5V20.5H18.5V9" fill="none" stroke="#333" stroke-width="1.5" stroke-linejoin="round"/></svg>
<svg class="s" style="left:29px;top:675px;" width="22" height="22" viewBox="0 0 22 22"><path d="M2.5 18C1.5 19 1.5 20 2.5 20.5C3.5 21.5 4.5 21 5 20.5L11.5 14C13.5 15 16 14.5 18 13C19.5 11.5 20 9.5 19.5 7.5L17 10H14.5L12.5 8V5.5L15 2.5C13 2 11 2.5 9.5 4C8 5.5 7.5 8 8.5 10Z" fill="none" stroke="#333" stroke-width="1.5" stroke-linejoin="round"/></svg>
<svg class="s" style="left:29px;top:735px;" width="22" height="22" viewBox="0 0 22 22"><path d="M1.6 14.2L5.6 10.6H9.6V17.6H5.6Z" fill="none" stroke="#5a5a5a" stroke-width="1.4" stroke-linejoin="round"/><path d="M10.8 1.6H20.2V10.4H17.8V19.6L16.2 20.8L14.6 19.6V18.2L13.8 17.4L14.6 16.6V15.2L13.8 14.4L14.6 13.6V10.4H10.8Z" fill="none" stroke="#5a5a5a" stroke-width="1.4" stroke-linejoin="round"/><ellipse cx="15.4" cy="5" rx="1.4" ry="0.9" fill="none" stroke="#5a5a5a" stroke-width="1.4" stroke-linejoin="round" stroke-width="1.2"/></svg>
<svg class="s" style="left:29px;top:795px;" width="22" height="22" viewBox="0 0 22 22"><rect x="3.5" y="1.5" width="15" height="19" rx="1" fill="none" stroke="#5a5a5a" stroke-width="1.4" stroke-linejoin="round"/><path d="M15.5 1.5V20.5" fill="none" stroke="#5a5a5a" stroke-width="1.4" stroke-linejoin="round"/><path d="M1.5 5H5M1.5 9H5M1.5 13H5M1.5 17H5" fill="none" stroke="#5a5a5a" stroke-width="1.4" stroke-linejoin="round"/></svg>
<svg class="s" style="left:29px;top:855px;" width="22" height="22" viewBox="0 0 22 22"><path d="M6.5 12.5C5 11 4.2 9 4.2 6.5C4.2 3 6.2 1.2 9.2 1.2C12.2 1.2 14.2 3 14.2 6.5C14.2 9 13.4 11 11.9 12.5L15.6 14.4C16.6 14.9 17 15.8 17 16.8V20.4H1V16.8C1 15.8 1.4 14.9 2.4 14.4Z" fill="none" stroke="#5a5a5a" stroke-width="1.4" stroke-linejoin="round"/><rect x="9.6" y="16.2" width="6.4" height="4.2" fill="none" stroke="#5a5a5a" stroke-width="1.3"/></svg>
</body></html>
